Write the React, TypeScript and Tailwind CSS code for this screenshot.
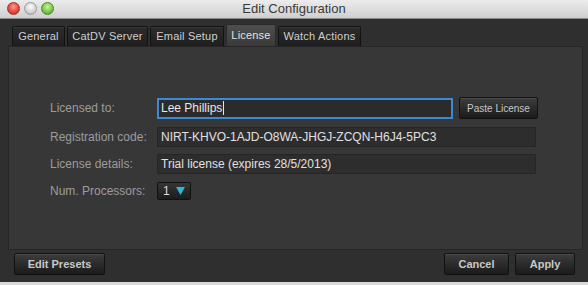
import React from 'react'

const tabs = [
  { name: 'General', w: 'w-[53px]' },
  { name: 'CatDV Server', w: 'w-[81px]' },
  { name: 'Email Setup', w: 'w-[74px]' },
  { name: 'License', w: 'w-[50px]', active: true },
  { name: 'Watch Actions', w: 'w-[83px]' },
]

function Btn({ label, className }: { label: string; className: string }) {
  return (
    <button
      className={
        'flex items-center justify-center rounded-[2px] border border-[#111] bg-gradient-to-b from-[#3d3d3d] to-[#1b1b1b] text-[#c8c8c8] shadow-[inset_0_1px_0_rgba(255,255,255,0.08)] ' +
        className
      }
    >
      {label}
    </button>
  )
}

export default function App() {
  return (
    <div
      className="flex h-[285px] w-[588px] flex-col bg-[#2f2f2f]"
      style={{ fontFamily: '"Liberation Sans", Arial, sans-serif' }}
    >
      {/* title bar */}
      <div className="relative flex h-[19px] items-center justify-center border-b border-[#8a8a8a] bg-gradient-to-b from-[#ececec] to-[#cfcfcf]">
        <div className="absolute left-[7px] top-[2px] flex gap-[4px]">
          <span className="h-[13px] w-[13px] rounded-full border border-[#a23030] bg-[radial-gradient(circle_at_50%_35%,#ff9a8f,#e0443a_60%,#b32a22)]" />
          <span className="h-[13px] w-[13px] rounded-full border border-[#9a9a9a] bg-[radial-gradient(circle_at_50%_35%,#ffffff,#d0d0d0_60%,#a8a8a8)]" />
          <span className="h-[13px] w-[13px] rounded-full border border-[#4c8a2a] bg-[radial-gradient(circle_at_50%_35%,#c8f59c,#72c443_60%,#4c9a26)]" />
        </div>
        <span className="text-[13px] text-[#3a3a3a]">Edit Configuration</span>
      </div>

      {/* tabs */}
      <div className="mt-[5px] flex items-end gap-[2px] pl-[12px]">
        {tabs.map(t =>
          t.active ? (
            <div
              key={t.name}
              className={`${t.w} flex h-[22px] items-center justify-center rounded-t-[2px] border border-b-0 border-[#2a2a2a] bg-gradient-to-b from-[#4e4e4e] to-[#3a3a3a] text-[11px] tracking-[0.2px] text-[#e2e2e2]`}
            >
              {t.name}
            </div>
          ) : (
            <div
              key={t.name}
              className={`${t.w} flex h-[20px] items-center justify-center rounded-t-[2px] border border-b-0 border-[#121212] bg-gradient-to-b from-[#2c2c2c] to-[#1f1f1f] text-[11px] tracking-[0.2px] text-[#cfcfcf] shadow-[inset_0_1px_0_rgba(255,255,255,0.07)]`}
            >
              {t.name}
            </div>
          )
        )}
      </div>

      {/* panel */}
      <div className="ml-[8px] mr-[5px] flex h-[204px] flex-col border border-[#262626] bg-[#373737] pl-[41px] pt-[50px]">
        <div className="flex h-[22px] items-center">
          <span className="w-[107px] text-[12px] text-[#9c9c9c]">Licensed to:</span>
          <div className="flex h-[21px] w-[296px] items-center border-2 border-[#3a8ad8] bg-[#2b2b2b] pl-[2px] text-[12px] text-[#e8e8e8]">
            Lee Phillips<span className="ml-[1px] h-[14px] w-px bg-[#e8e8e8]" />
          </div>
          <Btn label="Paste License" className="ml-[6px] h-[22px] w-[79px] text-[10px]" />
        </div>

        <div className="mt-[8px] flex h-[20px] items-center">
          <span className="w-[107px] text-[12px] text-[#9c9c9c]">Registration code:</span>
          <div className="flex h-[20px] w-[379px] items-center border border-[#262626] bg-[#2d2d2d] pl-[3px] text-[12px] text-[#e0e0e0]">
            NIRT-KHVO-1AJD-O8WA-JHGJ-ZCQN-H6J4-5PC3
          </div>
        </div>

        <div className="mt-[7px] flex h-[20px] items-center">
          <span className="w-[107px] text-[12px] text-[#9c9c9c]">License details:</span>
          <div className="flex h-[20px] w-[379px] items-center border border-[#262626] bg-[#2d2d2d] pl-[3px] text-[12px] text-[#e0e0e0]">
            Trial license (expires 28/5/2013)
          </div>
        </div>

        <div className="mt-[8px] flex h-[18px] items-center">
          <span className="w-[107px] text-[12px] text-[#9c9c9c]">Num. Processors:</span>
          <div className="flex h-[18px] w-[34px] items-center justify-between rounded-[2px] border border-[#111] bg-gradient-to-b from-[#353535] to-[#1c1c1c] px-[5px] text-[12px] text-[#dcdcdc]">
            <span>1</span>
            <svg width="9" height="8" viewBox="0 0 9 8">
              <polygon points="0,0 9,0 4.5,8" fill="#2fb6d9" />
            </svg>
          </div>
        </div>
      </div>

      {/* bottom buttons */}
      <div className="mt-[3px] flex items-start px-[14px] pr-[13px]">
        <Btn label="Edit Presets" className="h-[22px] w-[91px] text-[11px] font-bold" />
        <div className="flex-1" />
        <Btn label="Cancel" className="h-[22px] w-[65px] text-[11px] font-bold" />
        <Btn label="Apply" className="ml-[6px] h-[22px] w-[60px] text-[11px] font-bold" />
      </div>
      <div className="flex-1" />
      <div className="h-[3px] bg-[#d8d8d8]" />
    </div>
  )
}
